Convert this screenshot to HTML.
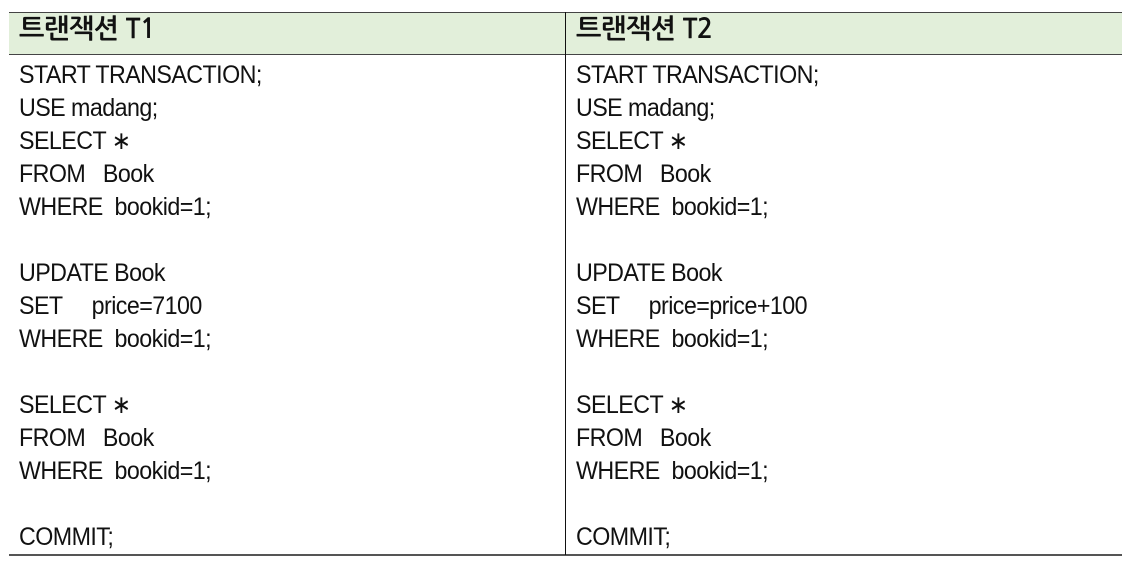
<!DOCTYPE html>
<html><head><meta charset="utf-8"><style>
body{margin:0;background:#fff;width:1131px;height:561px;position:relative;overflow:hidden;font-family:"Liberation Sans","NanumGothic",sans-serif;color:#111}
.hdr{position:absolute;left:9px;top:12px;width:1113px;height:41px;background:#e2efda;border-top:1.5px solid #444;border-bottom:1.5px solid #444}
.bot{position:absolute;left:9px;top:554px;width:1113px;height:0;border-top:2px solid #555}
.vl{position:absolute;left:565px;top:12px;width:1px;height:543px;background:#111}
.t{position:absolute;font-size:25px;white-space:pre;line-height:33px;letter-spacing:-0.6px;transform:scaleX(0.93);transform-origin:0 0;font-weight:300}
.h{position:absolute;top:16px;font-size:27px;font-weight:bold;font-family:"NanumGothic","Liberation Sans",sans-serif;letter-spacing:-0.5px}
</style></head><body>
<div class="hdr"></div><div class="bot"></div><div class="vl"></div>
<div class="h" style="left:19px">트랜잭션 T1</div>
<div class="h" style="left:576px">트랜잭션 T2</div>
<div class="t" style="left:19px;top:59px">START TRANSACTION;
USE madang;
SELECT ∗
FROM   Book
WHERE  bookid=1;

UPDATE Book
SET     price=7100
WHERE  bookid=1;

SELECT ∗
FROM   Book
WHERE  bookid=1;

COMMIT;</div>
<div class="t" style="left:576px;top:59px">START TRANSACTION;
USE madang;
SELECT ∗
FROM   Book
WHERE  bookid=1;

UPDATE Book
SET     price=price+100
WHERE  bookid=1;

SELECT ∗
FROM   Book
WHERE  bookid=1;

COMMIT;</div>
</body></html>
